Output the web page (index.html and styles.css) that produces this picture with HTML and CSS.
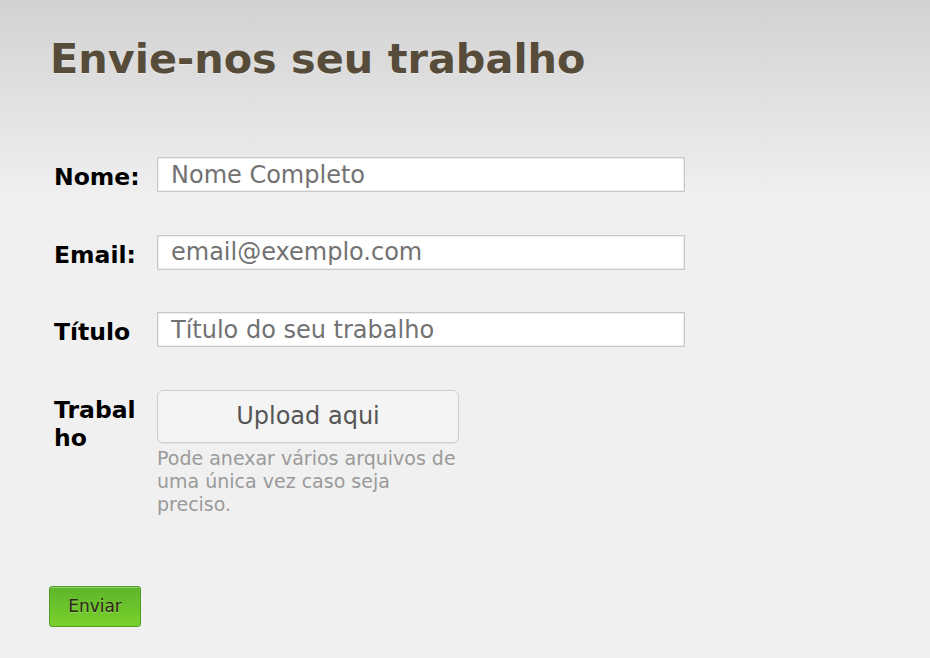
FILE: index.html
```html
<!DOCTYPE html>
<html lang="pt">
<head>
  <meta charset="UTF-8">
  <title>Envie-nos seu trabalho</title>
  <link rel="stylesheet" href="styles.css">
</head>
<body>
  <div class="container">
    <h1>Envie-nos seu trabalho</h1>

    <form class="send-form">
      <div class="form-row">
        <label for="nome">Nome:</label>
        <input type="text" id="nome" placeholder="Nome Completo">
      </div>
      <div class="form-row">
        <label for="email">Email:</label>
        <input type="text" id="email" placeholder="email@exemplo.com">
      </div>
      <div class="form-row">
        <label for="titulo">Título</label>
        <input type="text" id="titulo" placeholder="Título do seu trabalho">
      </div>
      <div class="form-row">
        <label>Trabalho</label>
        <div class="upload-box">
          <button type="button" class="upload-btn">Upload aqui</button>
          <p class="help">Pode anexar vários arquivos de uma única vez caso seja preciso.</p>
        </div>
      </div>

      <button type="submit" class="btn">Enviar</button>
    </form>
  </div>
</body>
</html>
```

FILE: styles.css
```css
html, body {
  height: 100%;
}
body {
  margin: 0;
  font-family: "DejaVu Sans", Verdana, sans-serif;
  background: #f0f0f0 linear-gradient(to bottom, #d2d2d2 0, #f0f0f0 200px) no-repeat;
}
.container {
  padding: 35px 0 0 49px;
}
h1 {
  margin: 0;
  padding-left: 1px;
  font-size: 41.4px;
  line-height: 49px;
  color: #574b3a;
  text-shadow: 0 1px 0 rgba(255,255,255,0.4);
}
.send-form {
  margin-top: 73px;
  padding-left: 5px;
}
.form-row {
  display: flex;
  align-items: flex-start;
  gap: 15px;
  margin-bottom: 42.5px;
}
.form-row label {
  width: 88px;
  padding-top: 6px;
  font-size: 23.5px;
  line-height: 28px;
  font-weight: bold;
  color: #000;
  word-wrap: break-word;
  overflow-wrap: anywhere;
}
.form-row input {
  width: 528px;
  height: 35px;
  box-sizing: border-box;
  margin: 0;
  padding: 0 13px;
  border: 1px solid #c9c9c9;
  box-shadow: inset 0 0 0 1px #ececec;
  background: #fff;
  font-family: inherit;
  font-size: 24px;
  color: #333;
}
.form-row input::placeholder {
  color: #727272;
}
.upload-box {
  width: 310px;
}
.upload-btn {
  display: block;
  width: 302px;
  height: 53px;
  margin: 0;
  border: 1px solid #cdcdcd;
  border-radius: 6px;
  background: #f4f4f4;
  box-shadow: 0 1px 1px rgba(0,0,0,0.05);
  font-family: inherit;
  font-size: 24px;
  color: #555;
}
.help {
  margin: 4px 0 0;
  font-size: 19px;
  line-height: 23px;
  color: #9a9a9a;
}
.btn {
  display: block;
  width: 92px;
  height: 41px;
  margin: 70px 0 0 -5px;
  border: 1px solid #4f9f22;
  border-radius: 3px;
  background: linear-gradient(to bottom, #5db52a, #7ad12c);
  box-shadow: inset 0 1px 0 rgba(255,255,255,0.35);
  font-family: inherit;
  font-size: 17px;
  color: #2e2418;
  text-shadow: 0 1px 0 rgba(255,255,255,0.3);
}
```
